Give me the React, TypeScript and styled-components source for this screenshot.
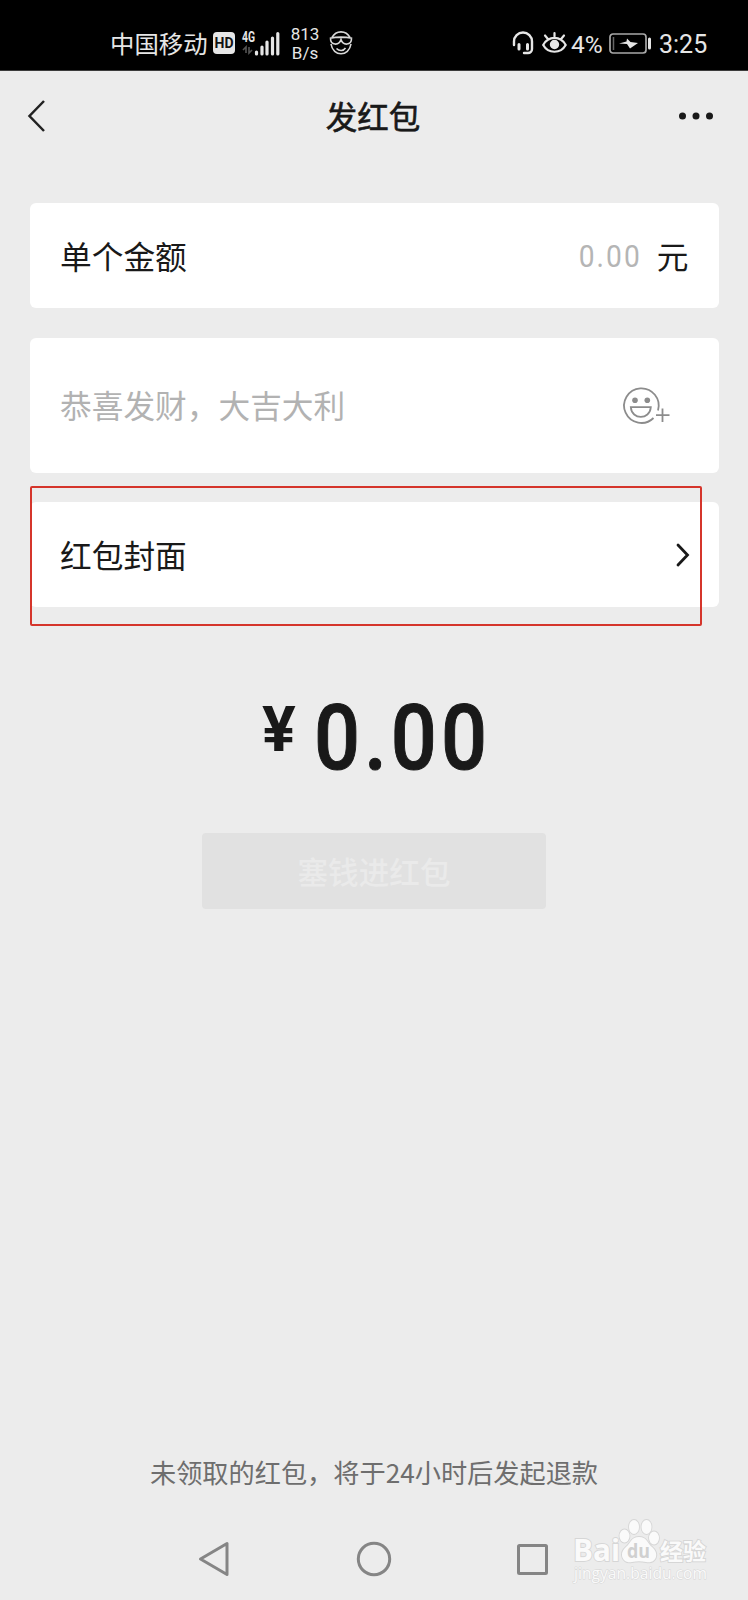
import React from "react";
import styled, { createGlobalStyle } from "styled-components";

const Global = createGlobalStyle`
  * { box-sizing: border-box; }
  body {
    margin: 0;
    background: #ececec;
    font-family: Roboto, "Noto Sans CJK SC", sans-serif;
    color: #191919;
  }
`;

const Screen = styled.div`
  position: relative;
  width: 748px;
  height: 1600px;
  display: flex;
  flex-direction: column;
  background: #ececec;
  overflow: hidden;
`;

const StatusBar = styled.header`
  height: 71px;
  flex: none;
  display: flex;
  align-items: center;
  justify-content: space-between;
  padding: 16px 42px 0 110px;
  background: #000;
  border-bottom: 1px solid #3c3c3c;
  color: #e6e6e6;
`;

const StatusGroup = styled.div`
  display: flex;
  align-items: center;
  height: 54px;
`;

const Carrier = styled.span`
  width: 103px;
  font: 24.4px/30px "Noto Sans CJK SC", sans-serif;
  white-space: nowrap;
`;

const HdBadge = styled.span`
  width: 22px;
  height: 22px;
  margin-right: 7px;
  border-radius: 4px;
  background: #e6e6e6;
  color: #111;
  font: 700 14px/22px Roboto, sans-serif;
  text-align: center;
`;

const NetSpeed = styled.span`
  width: 30px;
  margin: 2px 9px 0 10px;
  font: 17px/19px Roboto, sans-serif;
  text-align: center;
`;

const StatusText = styled.span<{ $w: number; $size: number }>`
  width: ${(p) => p.$w}px;
  padding-top: 3px;
  font: ${(p) => p.$size}px/30px Roboto, sans-serif;
  white-space: nowrap;
`;

const Icon = styled.svg<{ $mr?: number }>`
  flex: none;
  display: block;
  overflow: visible;
  fill: none;
  margin-right: ${(p) => p.$mr ?? 0}px;
`;

const TitleBar = styled.nav`
  height: 132px;
  flex: none;
  display: flex;
  align-items: flex-start;
  justify-content: space-between;
  padding: 29px 35px 0 27px;
`;

const Title = styled.h1`
  margin: -2px 0 0 22px;
  font: 400 31.5px/34px "Noto Sans CJK SC", sans-serif;
  -webkit-text-stroke: 0.6px #191919;
`;

const Form = styled.main`
  position: relative;
  display: flex;
  flex-direction: column;
  gap: 29.5px;
  padding: 0 29.5px;
`;

const Card = styled.section<{ $h: number; $pr: number }>`
  height: ${(p) => p.$h}px;
  display: flex;
  align-items: center;
  justify-content: space-between;
  padding: 0 ${(p) => p.$pr}px 0 30.5px;
  border-radius: 6px;
  background: #fff;
`;

const Label = styled.span<{ $muted?: boolean }>`
  padding-bottom: 2px;
  font: 31.7px/40px "Noto Sans CJK SC", sans-serif;
  color: ${(p) => (p.$muted ? "#b2b2b2" : "#191919")};
`;

const Amount = styled.div`
  display: flex;
  align-items: center;
  gap: 15px;
`;

const Placeholder = styled.span`
  font: 400 32px/40px Roboto, sans-serif;
  letter-spacing: 2.4px;
  transform: scaleX(0.88);
  transform-origin: right center;
  color: #b5b5b5;
`;

const Highlight = styled.div`
  position: absolute;
  left: 30px;
  top: 282.500px;
  width: 671.500px;
  height: 140px;
  border: 2px solid #d5352b;
  border-radius: 2px;
  pointer-events: none;
`;

const Total = styled.div`
  display: flex;
  align-items: flex-start;
  height: 226px;
  padding: 79px 0 0 262px;
`;

const Yen = styled.span`
  font: 700 63px/87px Roboto, sans-serif;
  margin-right: 18px;
`;

const Sum = styled.span`
  font: 500 90px/105px Roboto, sans-serif;
  letter-spacing: 4.6px;
  -webkit-text-stroke: 1px #191919;
  transform: scaleX(0.9);
  transform-origin: left center;
`;

const SubmitButton = styled.button`
  align-self: center;
  width: 344px;
  height: 76px;
  padding: 0;
  border: 0;
  border-radius: 4px;
  background: #e1e1e1;
  color: #eaeaea;
  font: 500 30.6px/40px "Noto Sans CJK SC", sans-serif;
`;

const Notice = styled.p`
  margin: auto 0 2px;
  text-align: center;
  color: #6e6e6e;
  font: 26.2px/34px "Noto Sans CJK SC", sans-serif;
`;

const SystemNav = styled.footer`
  height: 109px;
  flex: none;
  display: flex;
  justify-content: space-between;
  align-items: center;
  padding: 27px 200px 0 198px;
`;

const Watermark = styled.svg`
  position: absolute;
  left: 560px;
  top: 1510px;
  overflow: visible;
`;

export default function App() {
  return (
    <Screen>
      <Global />
      <StatusBar>
        <StatusGroup>
          <Carrier>中国移动</Carrier>
          <HdBadge>HD</HdBadge>
          <Icon width="38" height="24" viewBox="0 0 38 24">
            <text x="0" y="11" fontSize="14" fontWeight="700" fontFamily="Roboto" fill="#e6e6e6" textLength="13" lengthAdjust="spacingAndGlyphs">4G</text>
            <path d="M4 22v-6l-3 3M7 16v6l3-3" stroke="#555" strokeWidth="1.6" />
            <path d="M14.500 23v-2M20 23v-7M25 23v-12M30.500 23v-16M35.800 23v-20.500" stroke="#e6e6e6" strokeWidth="3.200" strokeLinecap="round" />
          </Icon>
          <NetSpeed>813<br />B/s</NetSpeed>
          <Icon width="24" height="24" viewBox="0 0 24 24" stroke="#d8d8d8" strokeWidth="1.600">
            <path d="M3 6.500C7-1 17-1 21 6.500M2 13c2 13 18 13 20 0M7.500 17.500c3 3 7 2.500 9-.5" />
            <path d="M.8 7.200Q12 5 23.200 7.200M1.500 7.500c0 7 8.500 7.500 10.500 1 2 6.500 10.500 6 10.500-1" />
          </Icon>
        </StatusGroup>
        <StatusGroup>
          <Icon $mr={8} width="22" height="24" viewBox="0 0 22 24" stroke="#e6e6e6" strokeLinecap="round">
            <path d="M2 14V10.500a9 9 0 0 1 18 0V18a4 4 0 0 1-4 4h-4" strokeWidth="2.400" />
            <path d="M7 13.500v4.500M15.500 13.500v4.500" strokeWidth="3" />
          </Icon>
          <Icon $mr={4} width="25" height="24" viewBox="0 0 25 24" stroke="#e6e6e6" strokeWidth="2.200" strokeLinecap="round">
            <path d="M1.200 14c5-9.500 17.500-9.500 22.500 0-5 9-17.500 9-22.500 0ZM12.500 5.500V2M5.500 7.500 3 4.500M19.500 7.500 22 4.500" />
            <circle cx="12.500" cy="13.500" r="3.600" fill="#e6e6e6" stroke="#e6e6e6" />
          </Icon>
          <StatusText $w={38} $size={24.5}>4%</StatusText>
          <Icon $mr={8} width="42" height="21" viewBox="0 0 42 21">
            <rect x="1" y="1" width="36" height="19" rx="3" stroke="#a8a8a8" strokeWidth="1.700" />
            <path d="M4.500 4v13" stroke="#666" strokeWidth="1.500" />
            <path d="M40.500 6v9" stroke="#e6e6e6" strokeWidth="3" strokeLinecap="round" />
            <path d="m10 10.500 8 .5 3 4.500 8-5.500-7.500-1-3.500-3.500-.5 3Z" fill="#e6e6e6" />
          </Icon>
          <StatusText $w={47} $size={25}>3:25</StatusText>
        </StatusGroup>
      </StatusBar>

      <TitleBar>
        <Icon width="18" height="32" viewBox="0 0 18 32">
          <path d="M17 1 2.500 16 17 31" stroke="#222" strokeWidth="2.500" />
        </Icon>
        <Title>发红包</Title>
        <Icon width="34" height="32" viewBox="0 0 34 32">
          <g fill="#191919">
            <circle cx="3.500" cy="16" r="3.500" />
            <circle cx="17" cy="16" r="3.500" />
            <circle cx="30.500" cy="16" r="3.500" />
          </g>
        </Icon>
      </TitleBar>

      <Form>
        <Card $h={105} $pr={30}>
          <Label>单个金额</Label>
          <Amount>
            <Placeholder>0.00</Placeholder>
            <Label>元</Label>
          </Amount>
        </Card>
        <Card $h={135} $pr={48.5}>
          <Label $muted>恭喜发财，大吉大利</Label>
          <Icon width="47" height="37" viewBox="0 0 47 37" stroke="#8c8c8c" strokeWidth="1.800">
            <path d="M35 23.500A17.300 17.300 0 1 0 30.500 31" />
            <path d="M7.800 20.200h20c-1 13-19 13-20 0ZM39.500 21.500V35M33 28.200h13.500" />
            <circle cx="12" cy="13.300" r="2.800" fill="#8c8c8c" stroke="none" />
            <circle cx="24.300" cy="13.300" r="2.800" fill="#8c8c8c" stroke="none" />
          </Icon>
        </Card>
        <Card $h={105} $pr={29.5}>
          <Label>红包封面</Label>
          <Icon width="13" height="24" viewBox="0 0 13 24">
            <path d="m2 2 9.500 10L2 22" stroke="#191919" strokeWidth="2.800" strokeLinecap="round" />
          </Icon>
        </Card>
        <Highlight />
      </Form>

      <Total>
        <Yen>¥</Yen>
        <Sum>0.00</Sum>
      </Total>
      <SubmitButton disabled>塞钱进红包</SubmitButton>

      <Notice>未领取的红包，将于24小时后发起退款</Notice>
      <SystemNav>
        <Icon width="32" height="36" viewBox="0 0 32 36">
          <path d="M29 2.500v31L2.500 18Z" stroke="#858585" strokeWidth="3" strokeLinejoin="round" />
        </Icon>
        <Icon width="34" height="34" viewBox="0 0 34 34">
          <circle cx="17" cy="17" r="15.700" stroke="#858585" strokeWidth="3" />
        </Icon>
        <Icon width="31" height="31" viewBox="0 0 31 31">
          <rect x="1.500" y="1.500" width="28" height="28" rx="1" stroke="#858585" strokeWidth="3" />
        </Icon>
      </SystemNav>

      <Watermark width="188" height="80" viewBox="0 0 188 80" fill="#fafafa" stroke="#d6d6d6" strokeWidth="1.800" paintOrder="stroke">
        <text x="13" y="51" fontFamily="Open Sans" fontWeight="700" fontSize="30" textLength="47" lengthAdjust="spacingAndGlyphs">Bai</text>
        <ellipse cx="64.500" cy="26" rx="5" ry="6.500" />
        <ellipse cx="74" cy="17" rx="5" ry="7" />
        <ellipse cx="86.500" cy="17" rx="5" ry="7" />
        <ellipse cx="94" cy="28" rx="5" ry="6.500" />
        <path d="M79 27c-8 0-8 6-13 10-8 7-3 17 6 15 5-1 9-1 14 0 10 2 14-8 6-15-5-4-5-10-13-10Z" />
        <text x="67" y="48" fontFamily="Open Sans" fontWeight="700" fontSize="19" fill="#d0d0d0" stroke="none" textLength="23" lengthAdjust="spacingAndGlyphs">du</text>
        <text x="100" y="50" fontFamily="Noto Sans CJK SC" fontWeight="700" fontSize="23" textLength="46">经验</text>
        <text x="14" y="69" fontFamily="Open Sans" fontSize="16" strokeWidth="1" textLength="133" lengthAdjust="spacingAndGlyphs">jingyan.baidu.com</text>
      </Watermark>
    </Screen>
  );
}
